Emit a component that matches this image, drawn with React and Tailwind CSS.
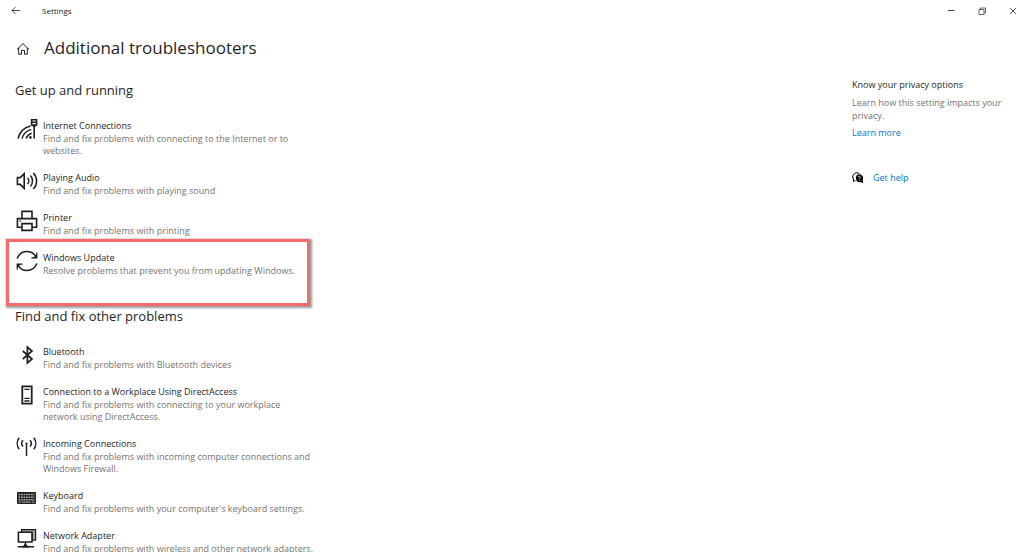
import React from "react";

// --- Icons ---
const Icon = ({ children, className = "size-[22px]", viewBox = "0 0 22 22" }) => (
  <svg
    className={className}
    viewBox={viewBox}
    fill="none"
    stroke="currentColor"
    strokeWidth="1.5"
    aria-hidden="true"
  >
    {children}
  </svg>
);

const BackIcon = () => (
  <Icon className="size-[10px]" viewBox="0 0 10 10">
    <path d="M9.3 4.5H1M4.6.9 1 4.5l3.6 3.6" strokeWidth="0.8" />
  </Icon>
);

const HomeIcon = () => (
  <Icon className="size-[14px]" viewBox="0 0 14 14">
    <path
      d="M1 8.4 7 2.6l6 5.8M2.7 7v6.2h2.8V9.4h3v3.8h2.8V7"
      strokeWidth="1"
    />
  </Icon>
);

const InternetIcon = () => (
  <Icon>
    <path d="M2 20.6A17 17 0 0 1 14.6 8M6 20.6a13 13 0 0 1 9.2-9.2M10 20.6a9 9 0 0 1 5.6-5.4" />
    <circle cx="14.4" cy="19.4" r="1.3" fill="currentColor" stroke="none" />
    <path d="M15.6 1.8h5V7h-5zM15.6 4.2h5M18.2 7.4v13.2" strokeWidth="1.6" />
    <path d="M16 7h4.4l-1.3 2.2h-1.8z" fill="currentColor" stroke="none" />
  </Icon>
);

const AudioIcon = () => (
  <Icon>
    <path d="M1.4 7.6h2.8l4-4v14.8l-4-4H1.4z" strokeWidth="1.6" />
    <path d="M11.6 8a4.4 4.4 0 0 1 0 6M14.4 5.6a8 8 0 0 1 0 10.8M17.4 3a11.6 11.6 0 0 1 0 16" />
  </Icon>
);

const PrinterIcon = () => (
  <Icon>
    <path
      d="M6 8.6V1.4h10v7.2M6 17.2H1.4V8.6h19.2v8.6H16M6 13.6h10v6.8H6z"
      strokeWidth="1.6"
    />
    <path d="M3.4 10.4h1.8v1.2H3.4z" fill="currentColor" stroke="none" />
  </Icon>
);

const UpdateIcon = () => (
  <Icon>
    <path d="M1.2 8.4C3 3.8 6.8 1.4 11 1.4c3.8 0 6.9 1.9 8.7 5M20.8 13.6c-1.8 4.6-5.6 7-9.8 7-3.8 0-6.9-1.9-8.7-5" />
    <path d="M20.8 2.4v5.4h-5.4M1.2 19.6v-5.4h5.4" strokeWidth="1.2" />
    <path d="M21 4v4h-4zM1 18v-4h4z" fill="currentColor" stroke="none" />
  </Icon>
);

const BluetoothIcon = () => (
  <Icon>
    <path d="m6.8 7 9.2 8-4.6 4V3L16 7l-9.2 8" strokeWidth="1.7" />
  </Icon>
);

const DirectAccessIcon = () => (
  <Icon>
    <path d="M6.3 2.3h9.4v17.4H6.3z" strokeWidth="1.8" />
    <path d="M8.4 5.3h5.2M8.4 14.4h5.2M8.4 17h5.2" strokeWidth="1.3" />
  </Icon>
);

const IncomingIcon = () => (
  <Icon>
    <path d="M10.5 7.4V20" />
    <path d="M7 4.2a4.8 4.8 0 0 0 0 6.4M14 4.2a4.8 4.8 0 0 1 0 6.4M3.2 1.8a9.2 9.2 0 0 0 0 11.4M17.8 1.8a9.2 9.2 0 0 1 0 11.4" />
    <circle cx="10.5" cy="7.4" r="1" fill="currentColor" stroke="none" />
  </Icon>
);

const KeyboardIcon = () => (
  <Icon>
    <rect x="1" y="4" width="19" height="12" rx="1" fill="currentColor" stroke="none" />
    <path
      d="M2.6 6.5h16M2.6 9.2h16M2.6 11.7h16"
      stroke="#b5b5b5"
      strokeWidth="1.5"
      strokeDasharray="1.6 .9"
    />
    <path d="M2.6 14.1h2.4M6.2 14.1h8.6M16 14.1h2.4" stroke="#b5b5b5" strokeWidth="1" />
  </Icon>
);

const NetworkIcon = () => (
  <Icon>
    <path d="M5.6 1.6h14v10.6H16V5H5.6z" fill="#a3a3a3" strokeWidth="1.2" />
    <path d="M2.4 4.2H16V14H2.4z" fill="white" strokeWidth="1.6" />
    <path d="M9.4 14.6v3.6M1.6 18.8H18" />
    <path d="M9.4 15.2 13 19.4H5.8z" fill="currentColor" stroke="none" />
  </Icon>
);

const HelpIcon = () => (
  <Icon className="size-[12px]" viewBox="0 0 12 12">
    <path d="M1.4 9.4V7A4 4 0 0 1 4.4.8a4.2 4.2 0 0 1 3.2 1.2M1.4 9.4l2-1" strokeWidth="1" />
    <path
      d="M7.2 2.2a4 4 0 0 1 3.5 6l.6 3-2.6-1.1a4 4 0 1 1-1.5-7.9z"
      fill="currentColor"
      stroke="none"
    />
    <path d="M6.2 5.2c0-1.4 2.2-1.3 2.2 0 0 .9-1.1.9-1.1 1.9M7.3 7.8v.9" stroke="white" strokeWidth="0.8" />
  </Icon>
);

// --- Data ---
const GET_RUNNING = [
  {
    title: "Internet Connections",
    text: "Find and fix problems with connecting to the Internet or to websites.",
    icon: InternetIcon,
  },
  {
    title: "Playing Audio",
    text: "Find and fix problems with playing sound",
    icon: AudioIcon,
  },
  {
    title: "Printer",
    text: "Find and fix problems with printing",
    icon: PrinterIcon,
  },
  {
    title: "Windows Update",
    text: "Resolve problems that prevent you from updating Windows.",
    icon: UpdateIcon,
    highlighted: true,
  },
];

const OTHER_PROBLEMS = [
  {
    title: "Bluetooth",
    text: "Find and fix problems with Bluetooth devices",
    icon: BluetoothIcon,
  },
  {
    title: "Connection to a Workplace Using DirectAccess",
    text: "Find and fix problems with connecting to your workplace network using DirectAccess.",
    icon: DirectAccessIcon,
  },
  {
    title: "Incoming Connections",
    text: "Find and fix problems with incoming computer connections and Windows Firewall.",
    icon: IncomingIcon,
  },
  {
    title: "Keyboard",
    text: "Find and fix problems with your computer's keyboard settings.",
    icon: KeyboardIcon,
  },
  {
    title: "Network Adapter",
    text: "Find and fix problems with wireless and other network adapters.",
    icon: NetworkIcon,
  },
];

function TitleBar() {
  return (
    <header className="flex h-[22px] items-center justify-between pl-[11px] pr-[7px]">
      <div className="flex items-center gap-[21px]">
        <button type="button" aria-label="Back" className="flex">
          <BackIcon />
        </button>
        <span className="text-[8px] leading-3">Settings</span>
      </div>
      <div className="flex items-center gap-[23px] text-[#444]">
        <button type="button" aria-label="Minimize" className="flex">
          <Icon className="size-2" viewBox="0 0 8 8">
            <path d="M1 3.5h6.5" strokeWidth="1" />
          </Icon>
        </button>
        <button type="button" aria-label="Restore" className="flex">
          <Icon className="size-2" viewBox="0 0 8 8">
            <path d="M1 2.5h5v5H1zM2.5 2.5v-1.5h5v5H6" strokeWidth="0.8" />
          </Icon>
        </button>
        <button type="button" aria-label="Close" className="flex">
          <Icon className="size-2" viewBox="0 0 8 8">
            <path d="m1 1 6 6M7 1 1 7" strokeWidth="0.9" />
          </Icon>
        </button>
      </div>
    </header>
  );
}

function Troubleshooter({ item }) {
  const ItemIcon = item.icon;
  return (
    <li className="relative">
      <button type="button" className="flex w-full items-start gap-[5px] text-left">
        <span className="shrink-0">
          <ItemIcon />
        </span>
        <span className="flex flex-col pt-px">
          <span className="text-[9px] leading-[14px]">{item.title}</span>
          <span className="text-[9px] leading-[12px] text-[#757575]">{item.text}</span>
        </span>
      </button>
      {item.highlighted && (
        <span className="pointer-events-none absolute -left-[10px] right-[5px] -top-[11px] h-[67px] border-[3px] border-[#fb6a6a] shadow-[1px_1px_2px_1px_rgba(0,0,0,0.4)]" />
      )}
    </li>
  );
}

function TroubleshooterSection({ title, items }) {
  return (
    <section>
      <h2 className="text-[13px] leading-5">{title}</h2>
      <ul className="ml-px mt-[18px] flex w-[299px] flex-col gap-[13px]">
        {items.map((item) => (
          <Troubleshooter key={item.title} item={item} />
        ))}
      </ul>
    </section>
  );
}

export default function App() {
  return (
    <div className="h-screen overflow-hidden bg-white font-['Open_Sans','Noto_Sans',sans-serif] text-[#1f1f1f]">
      <TitleBar />
      <div className="flex items-start justify-between">
        <main className="pl-[15px] pt-[12px]">
          <div className="flex items-center gap-[14px] pl-px">
            <a href="#home" aria-label="Home">
              <HomeIcon />
            </a>
            <h1 className="text-[17px] leading-7">Additional troubleshooters</h1>
          </div>
          <div className="mt-[18px] flex flex-col gap-[29px]">
            <TroubleshooterSection title="Get up and running" items={GET_RUNNING} />
            <TroubleshooterSection title="Find and fix other problems" items={OTHER_PROBLEMS} />
          </div>
        </main>
        <aside className="w-[172px] pt-[56px] text-[9px] leading-[13px]">
          <h2>Know your privacy options</h2>
          <p className="mt-[5px] pr-4 text-[#757575]">
            Learn how this setting impacts your privacy.
          </p>
          <a href="#privacy" className="mt-[4px] block text-[#0078d4]">
            Learn more
          </a>
          <a href="#help" className="mt-[32px] flex items-center gap-[9px] text-[#0078d4]">
            <span className="text-black">
              <HelpIcon />
            </span>
            Get help
          </a>
        </aside>
      </div>
    </div>
  );
}
